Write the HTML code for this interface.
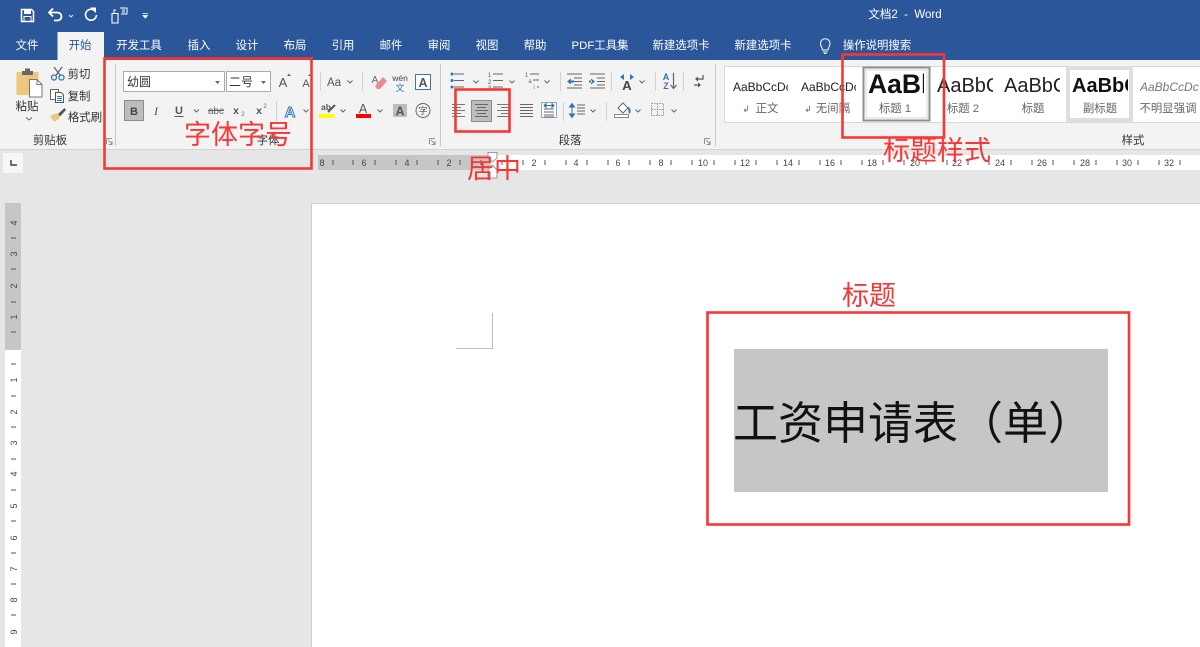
<!DOCTYPE html>
<html lang="zh-CN">
<head>
<meta charset="utf-8">
<title>文档2 - Word</title>
<style>
html,body{margin:0;padding:0;width:1200px;height:647px;overflow:hidden;background:#e6e6e6}
svg{position:absolute;left:0;top:0;display:block;filter:blur(.3px)}
text{font-family:"Liberation Sans","Noto Sans CJK SC",sans-serif}
.tab{font-size:11.4px;fill:#fff;text-anchor:middle}
.lb{font-size:11.4px;fill:#333;text-anchor:middle}
.gl{font-size:11.4px;fill:#666;text-anchor:middle}
.rn{font-size:9px;fill:#444;text-anchor:middle}
.an{font-size:27px;fill:#f93636;font-weight:400;font-family:"Noto Sans CJK SC",sans-serif}
.ch{fill:none;stroke:#666;stroke-width:1}
.bl{fill:#2e75b6}
.sep{stroke:#d2d2d2;stroke-width:1}
</style>
</head>
<body>
<svg width="1200" height="647" viewBox="0 0 1200 647" xmlns="http://www.w3.org/2000/svg">
<defs>
<clipPath id="c1"><rect x="732" y="70" width="56" height="30"/></clipPath>
<clipPath id="c2"><rect x="799" y="70" width="57" height="30"/></clipPath>
<clipPath id="c3"><rect x="867" y="70" width="57" height="30"/></clipPath>
<clipPath id="c4"><rect x="936" y="70" width="57" height="30"/></clipPath>
<clipPath id="c5"><rect x="1003" y="70" width="57" height="30"/></clipPath>
<clipPath id="c6"><rect x="1071" y="70" width="57" height="30"/></clipPath>
<clipPath id="c7"><rect x="1140" y="70" width="60" height="30"/></clipPath>
</defs>

<!-- title bar -->
<rect x="0" y="0" width="1200" height="60" fill="#2b579a"/>
<rect x="57.5" y="32" width="46.5" height="28" fill="#f3f3f3"/>
<!-- save -->
<path d="M21.500 9.500H31.500L33.500 11.500V21.500H21.500Z" fill="none" stroke="#fff" stroke-width="1.500"/>
<rect x="24" y="10" width="7" height="4" fill="#fff"/>
<rect x="24" y="16.500" width="7" height="5" fill="none" stroke="#fff"/>
<!-- undo -->
<path d="M50 12.500H57C60 12.500 61.500 14.500 61.500 16.500S60 20.500 57 20.500H54" fill="none" stroke="#fff" stroke-width="1.800"/>
<path d="M53 8.500L49 12.500L53 16.500" fill="none" stroke="#fff" stroke-width="1.800"/>
<path d="M69 15L71 17L73 15" fill="none" stroke="#dfe6f2" stroke-width="1"/>
<!-- redo -->
<path d="M94.500 10.500A5.500 5.500 0 1 0 96.500 15" fill="none" stroke="#fff" stroke-width="1.600"/>
<path d="M90 7.500H96V13Z" fill="#fff"/>
<!-- touch -->
<path d="M112 13.500H118V23H112Z" fill="none" stroke="#fff" stroke-width="1.100"/>
<path d="M114 13V10H116M120 8H127V14H121" fill="none" stroke="#fff" stroke-width="1"/>
<path d="M122 10H125M122 12H125" stroke="#fff" stroke-width="1"/>
<path d="M142.500 13.500H148M143 15.500L145.250 18L147.500 15.500Z" fill="#fff" stroke="#fff" stroke-width=".8"/>
<text x="905" y="18" text-anchor="middle" font-size="11.500" fill="#fff" xml:space="preserve">文档2  -  Word</text>

<!-- tabs -->
<text class="tab" x="27" y="49">文件</text>
<text class="tab" x="80" y="49" style="fill:#2b579a">开始</text>
<text class="tab" x="139" y="49">开发工具</text>
<text class="tab" x="199" y="49">插入</text>
<text class="tab" x="247" y="49">设计</text>
<text class="tab" x="295" y="49">布局</text>
<text class="tab" x="343" y="49">引用</text>
<text class="tab" x="391" y="49">邮件</text>
<text class="tab" x="439" y="49">审阅</text>
<text class="tab" x="487" y="49">视图</text>
<text class="tab" x="535" y="49">帮助</text>
<text class="tab" x="600" y="49">PDF工具集</text>
<text class="tab" x="681" y="49">新建选项卡</text>
<text class="tab" x="763" y="49">新建选项卡</text>
<text class="tab" x="877" y="49">操作说明搜索</text>
<path d="M822.500 50C822.500 47.500 820.500 46.500 820.500 43.500A4.700 4.700 0 0 1 830 43.500C830 46.500 828 47.500 828 50ZM823 52H827.500M824 53.500H826.500" fill="none" stroke="#fff" stroke-width="1"/>

<!-- ribbon -->
<rect x="0" y="60" width="1200" height="89" fill="#f3f3f3"/>
<rect x="0" y="149" width="1200" height="1" fill="#d4d4d4"/>
<rect x="0" y="150" width="1200" height="497" fill="#e6e6e6"/>

<!-- clipboard group -->
<path d="M16.500 72H38.500V88H29V95H16.500Z" fill="#eec67e"/>
<rect x="22" y="71" width="11" height="4" fill="#666"/>
<rect x="25" y="68.500" width="5" height="3" fill="#666"/>
<path d="M29.500 79.500H37L42 84.500V97H29.500Z" fill="#fff" stroke="#777" stroke-width="1"/>
<path d="M37 79.500V84.500H42" fill="none" stroke="#777"/>
<text class="lb" x="27" y="110" style="font-size:11.500px">粘贴</text>
<path class="ch" d="M26 117.500L29 120L32 117.500"/>
<!-- scissors -->
<path d="M54 67L60.500 76M62 67L55.500 76" stroke="#666" stroke-width="1.300"/>
<circle cx="54" cy="77.500" r="2.500" fill="none" stroke="#2e75b6" stroke-width="1.300"/>
<circle cx="61.500" cy="77.500" r="2.500" fill="none" stroke="#2e75b6" stroke-width="1.300"/>
<text class="lb" x="79" y="78">剪切</text>
<!-- copy -->
<rect x="50.500" y="89.500" width="8" height="10" fill="#fff" stroke="#666"/>
<path d="M55.500 92.500H61L63.500 95V102.500H55.500Z" fill="#fff" stroke="#555"/>
<path d="M57 96.500H62M57 98.500H62M57 100.500H62" stroke="#2e75b6" stroke-width=".9"/>
<text class="lb" x="79" y="100">复制</text>
<!-- format painter -->
<path d="M50 116L57 113L60 118L54 122Z" fill="#eec67e"/>
<path d="M58 114L64.500 108L66 110L60 116.500Z" fill="#555"/>
<text class="lb" x="85" y="121">格式刷</text>
<text class="lb" x="50" y="144">剪贴板</text>
<line class="sep" x1="115.500" y1="64" x2="115.500" y2="146" style="stroke:#c8c8c8"/>
<path d="M106.500 138.500H112M106.500 138.500V144M108 140L112 144M112 141V144.500H108.500" fill="none" stroke="#777" stroke-width=".8"/>

<!-- font group -->
<rect x="123.500" y="71.500" width="101" height="20" fill="#fff" stroke="#ababab"/>
<text x="127" y="86" font-size="12" fill="#333">幼圆</text>
<path d="M215 81H220L217.500 84Z" fill="#666"/>
<rect x="226.500" y="71.500" width="44" height="20" fill="#fff" stroke="#ababab"/>
<text x="229" y="86" font-size="12" fill="#333">二号</text>
<path d="M261 81H266L263.500 84Z" fill="#666"/>
<text x="283" y="87" text-anchor="middle" font-size="13" fill="#555">A</text>
<path d="M287 76H291L289 73.500Z" fill="#2e75b6"/>
<text x="306" y="87" text-anchor="middle" font-size="11" fill="#555">A</text>
<path d="M308 76H311L309.500 74Z" fill="#2e75b6"/>
<rect x="124.500" y="100.500" width="19" height="20" fill="#bdbdbd" stroke="#8c8c8c"/>
<text x="134" y="115" text-anchor="middle" font-size="11" font-weight="700" fill="#444">B</text>
<text x="156" y="115" text-anchor="middle" font-size="12" font-style="italic" fill="#555" style="font-family:'Liberation Serif',serif">I</text>
<text x="179" y="114" text-anchor="middle" font-size="11" font-weight="700" fill="#555">U</text>
<line x1="174.500" y1="116.500" x2="183.500" y2="116.500" stroke="#555"/>
<path class="ch" d="M194 109.500L196.500 112L199 109.500"/>
<text x="216" y="114" text-anchor="middle" font-size="10" fill="#666">abc</text>
<line x1="208" y1="110.500" x2="224" y2="110.500" stroke="#666"/>
<text x="236" y="114" text-anchor="middle" font-size="10.500" font-weight="700" fill="#555">x</text>
<text x="243" y="116" text-anchor="middle" font-size="6" fill="#2e75b6">2</text>
<text x="259" y="114" text-anchor="middle" font-size="10.500" font-weight="700" fill="#555">x</text>
<text x="265" y="108" text-anchor="middle" font-size="6" fill="#2e75b6">2</text>
<line class="sep" x1="276.500" y1="101" x2="276.500" y2="121"/>
<text x="290" y="117" text-anchor="middle" font-size="15" font-weight="700" fill="#dbe7f5" stroke="#2e75b6" stroke-width=".9">A</text>
<path class="ch" d="M303.500 109.500L306 112L308.500 109.500"/>
<line class="sep" x1="320.500" y1="72" x2="320.500" y2="91"/>
<text x="334" y="86" text-anchor="middle" font-size="11.500" fill="#555">Aa</text>
<path class="ch" d="M347.500 80.500L350 83L352.500 80.500"/>
<line class="sep" x1="362.500" y1="72" x2="362.500" y2="91"/>
<text x="375" y="83" text-anchor="middle" font-size="10" fill="#666">A</text>
<path d="M375 86L383 77L387 81L380 89H377Z" fill="#ea8a99"/>
<text x="400" y="81" text-anchor="middle" font-size="8.500" fill="#444">wén</text>
<text x="400" y="91" text-anchor="middle" font-size="9" fill="#2e75b6">文</text>
<rect x="415.500" y="74.500" width="15" height="15" fill="#fff" stroke="#3f75ae"/>
<text x="423" y="87" text-anchor="middle" font-size="12.500" font-weight="700" fill="#555">A</text>
<text x="326" y="110" text-anchor="middle" font-size="8.500" font-weight="700" fill="#555">ab</text>
<path d="M328 112L335 105" stroke="#555" stroke-width="2"/>
<rect x="319" y="114" width="15" height="4" fill="#ffff00"/>
<path class="ch" d="M340.500 109.500L343 112L345.500 109.500"/>
<text x="363" y="113" text-anchor="middle" font-size="12.500" fill="#555">A</text>
<rect x="356" y="114" width="15" height="4" fill="#f00"/>
<path class="ch" d="M377.500 109.500L380 112L382.500 109.500"/>
<rect x="393" y="104" width="14" height="13" fill="#bdbdbd"/>
<text x="400" y="115.500" text-anchor="middle" font-size="12.500" font-weight="700" fill="#555">A</text>
<circle cx="423" cy="110.500" r="7" fill="none" stroke="#666"/>
<text x="423" y="114" text-anchor="middle" font-size="9" fill="#555">字</text>
<text class="lb" x="268" y="144">字体</text>
<path d="M429.500 138.500H435M429.500 138.500V144M431 140L435 144M435 141V144.500H431.500" fill="none" stroke="#777" stroke-width=".8"/>
<line class="sep" x1="440.500" y1="64" x2="440.500" y2="146" style="stroke:#c8c8c8"/>

<!-- paragraph group row 1 -->
<path d="M454 74H464M454 80.500H464M454 87H464" stroke="#666"/>
<circle cx="452" cy="74" r="1.500" class="bl"/><circle cx="452" cy="80.500" r="1.500" class="bl"/><circle cx="452" cy="87" r="1.500" class="bl"/>
<path class="ch" d="M473.500 80.500L476 83L478.500 80.500"/>
<path d="M493 74H503M493 80.500H503M493 87H503" stroke="#666"/>
<text x="489.500" y="77" text-anchor="middle" font-size="6.500" fill="#2e75b6">1</text>
<text x="489.500" y="84" text-anchor="middle" font-size="6.500" fill="#2e75b6">2</text>
<text x="489.500" y="90" text-anchor="middle" font-size="6.500" fill="#2e75b6">3</text>
<path class="ch" d="M509.500 80.500L512 83L514.500 80.500"/>
<path d="M530 74H539M533 80H539M537 87H539" stroke="#666"/>
<text x="526.500" y="77" text-anchor="middle" font-size="6" fill="#2e75b6">1</text>
<text x="530" y="83" text-anchor="middle" font-size="6" fill="#2e75b6">a</text>
<text x="534" y="89" text-anchor="middle" font-size="6" fill="#2e75b6">i</text>
<path class="ch" d="M544.500 80.500L547 83L549.500 80.500"/>
<line class="sep" x1="560.500" y1="72" x2="560.500" y2="91"/>
<path d="M567 74H582M574 78H582M574 81.500H582M574 85H582M567 88H582" stroke="#666"/>
<path d="M567 81.500L571 78.500V84.500ZM570 80.500H574V82.500H570Z" fill="#2e75b6"/>
<path d="M590 74H605M597 78H605M597 81.500H605M597 85H605M590 88H605" stroke="#666"/>
<path d="M595 81.500L591 78.500V84.500ZM589 80.500H592V82.500H589Z" fill="#2e75b6"/>
<line class="sep" x1="611.500" y1="72" x2="611.500" y2="91"/>
<text x="627" y="90" text-anchor="middle" font-size="13" font-weight="700" fill="#444">A</text>
<path d="M620 77L624 74V80ZM634 77L630 74V80Z" fill="#2e75b6"/>
<path class="ch" d="M639.500 80.500L642 83L644.500 80.500"/>
<line class="sep" x1="655.500" y1="72" x2="655.500" y2="91"/>
<text x="666" y="80" text-anchor="middle" font-size="9" font-weight="700" fill="#2e75b6">A</text>
<text x="666" y="89" text-anchor="middle" font-size="9" font-weight="700" fill="#7b52a8">Z</text>
<path d="M673.500 73V88M670.500 85L673.500 88.500L676.500 85" fill="none" stroke="#666" stroke-width="1.200"/>
<line class="sep" x1="683.500" y1="72" x2="683.500" y2="91"/>
<path d="M703 75V79H697" fill="none" stroke="#555" stroke-width="1.200"/>
<path d="M695 79L698 76.500V81.500Z" fill="#555"/>
<path d="M694 85H700" stroke="#555" stroke-width="1.200"/>
<path d="M701 85L698 82.500V87.500Z" fill="#555"/>
<line x1="715.500" y1="64" x2="715.500" y2="146" stroke="#c8c8c8"/>

<!-- paragraph row 2 -->
<path d="M452 104.500H465M452 107.500H461M452 110.500H465M452 113.500H461M452 116.500H465" stroke="#777"/>
<rect x="471.500" y="100.500" width="20" height="21" fill="#bdbdbd" stroke="#8c8c8c"/>
<path d="M475 104.500H488M477 107.500H486M475 110.500H488M477 113.500H486M475 116.500H488" stroke="#666"/>
<path d="M497 104.500H510M501 107.500H510M497 110.500H510M501 113.500H510M497 116.500H510" stroke="#777"/>
<path d="M520 104.500H533M520 107.500H533M520 110.500H533M520 113.500H533M520 116.500H533" stroke="#666"/>
<rect x="541.500" y="102.500" width="15" height="15" fill="#fff" stroke="#85a9cf"/>
<path d="M544 109H554M544 112H554M544 115H554M544 117H554" stroke="#666"/>
<path d="M544 105.500H554M544 105.500L546 103.500V107.500ZM554 105.500L552 103.500V107.500Z" stroke="#2e75b6" fill="#2e75b6"/>
<line class="sep" x1="563.500" y1="102" x2="563.500" y2="121"/>
<path d="M572 105V116M569.500 107L572 103.500L574.500 107ZM569.500 114L572 117.500L574.500 114Z" stroke="#2e75b6" fill="#2e75b6"/>
<path d="M577 105H585M577 108H585M577 111H585M577 114H585" stroke="#666"/>
<path class="ch" d="M590.500 109.500L593 112L595.500 109.500"/>
<line class="sep" x1="606.500" y1="102" x2="606.500" y2="121"/>
<path d="M618 108L623 103L628 108L623 113Z" fill="#fff" stroke="#666"/>
<path d="M628 108C630 109 630 112 629 113" stroke="#2e75b6" stroke-width="2" fill="none"/>
<rect x="614.500" y="114.500" width="14" height="3" fill="#fff" stroke="#888"/>
<path class="ch" d="M635.500 109.500L638 112L640.500 109.500"/>
<rect x="651.500" y="103.500" width="12" height="12" fill="none" stroke="#999" stroke-dasharray="1.500 1"/>
<path d="M657.500 103.500V115.500M651.500 109.500H663.500" stroke="#999" stroke-dasharray="1.500 1"/>
<path class="ch" d="M671.500 109.500L674 112L676.500 109.500"/>
<text class="lb" x="570" y="144">段落</text>
<path d="M704.500 138.500H710M704.500 138.500V144M706 140L710 144M710 141V144.500H706.500" fill="none" stroke="#777" stroke-width=".8"/>

<!-- styles gallery -->
<rect x="724.500" y="66.500" width="476" height="56" fill="#fff" stroke="#d9d9d9"/>
<rect x="863.500" y="67.500" width="66" height="53" fill="#fff" stroke="#8f8f8f" stroke-width="2"/>
<rect x="866" y="70" width="61" height="48" fill="none" stroke="#d6d6d6"/>
<rect x="1068" y="68" width="63" height="52" fill="#fff" stroke="#e0dedc" stroke-width="4"/>
<g clip-path="url(#c1)"><text x="733" y="91" font-size="12" fill="#222">AaBbCcDc</text></g>
<g clip-path="url(#c2)"><text x="801" y="91" font-size="12" fill="#222">AaBbCcDc</text></g>
<g clip-path="url(#c3)"><text x="868" y="93" font-size="26.500" font-weight="700" fill="#111">AaBb</text></g>
<g clip-path="url(#c4)"><text x="937" y="92" font-size="20" fill="#222">AaBbC</text></g>
<g clip-path="url(#c5)"><text x="1004" y="92" font-size="20" fill="#222">AaBbC</text></g>
<g clip-path="url(#c6)"><text x="1072" y="92" font-size="20" font-weight="700" fill="#111">AaBbC</text></g>
<g clip-path="url(#c7)"><text x="1140" y="91" font-size="12" font-style="italic" fill="#777">AaBbCcDc</text></g>
<text x="746" y="112" text-anchor="middle" font-size="9" fill="#666">↲</text>
<text class="gl" x="767" y="112">正文</text>
<text x="808" y="112" text-anchor="middle" font-size="9" fill="#666">↲</text>
<text class="gl" x="833" y="112">无间隔</text>
<text class="gl" x="895" y="112">标题 1</text>
<text class="gl" x="963" y="112">标题 2</text>
<text class="gl" x="1033" y="112">标题</text>
<text class="gl" x="1100" y="112">副标题</text>
<text class="gl" x="1168" y="112">不明显强调</text>
<text class="lb" x="1133" y="144">样式</text>

<!-- corner marker -->
<rect x="3" y="153" width="20" height="20" fill="#f7f7f7"/>
<path d="M11 160V165H17" fill="none" stroke="#444" stroke-width="1.500"/>

<!-- horizontal ruler -->
<rect x="318" y="155" width="173" height="15" fill="#c6c6c6"/>
<rect x="491" y="155" width="709" height="15" fill="#fff"/>
<path stroke="#555" stroke-width="1" d="M333 160V165M353 160V165M375 160V165M396 160V165M417 160V165M438 160V165M460 160V165M481 160V165M502 160V165M523 160V165M545 160V165M566 160V165M587 160V165M608 160V165M629 160V165M650 160V165M671 160V165M692 160V165M714 160V165M735 160V165M756 160V165M777 160V165M799 160V165M820 160V165M841 160V165M862 160V165M883 160V165M904 160V165M926 160V165M947 160V165M968 160V165M989 160V165M1011 160V165M1032 160V165M1053 160V165M1074 160V165M1096 160V165M1117 160V165M1138 160V165M1159 160V165M1180 160V165"/>
<g>
<text class="rn" x="322" y="166">8</text><text class="rn" x="364" y="166">6</text><text class="rn" x="407" y="166">4</text><text class="rn" x="449" y="166">2</text>
<text class="rn" x="534" y="166">2</text><text class="rn" x="576" y="166">4</text><text class="rn" x="618" y="166">6</text><text class="rn" x="661" y="166">8</text><text class="rn" x="703" y="166">10</text><text class="rn" x="745" y="166">12</text><text class="rn" x="788" y="166">14</text><text class="rn" x="830" y="166">16</text><text class="rn" x="872" y="166">18</text><text class="rn" x="915" y="166">20</text><text class="rn" x="957" y="166">22</text><text class="rn" x="1000" y="166">24</text><text class="rn" x="1042" y="166">26</text><text class="rn" x="1085" y="166">28</text><text class="rn" x="1127" y="166">30</text><text class="rn" x="1169" y="166">32</text>
</g>
<path d="M488 152.500H497V158L492.500 162L488 158Z" fill="#fff" stroke="#999"/>
<path d="M488 170L492.500 165L497 170V178H488Z" fill="#fff" stroke="#999"/>

<!-- vertical ruler -->
<rect x="5" y="203" width="16" height="147" fill="#c6c6c6"/>
<rect x="5" y="350" width="16" height="297" fill="#fff"/>
<path d="M11 238H16M11 269H16M11 302H16M11 332H16M11 364H16M11 396H16M11 427H16M11 459H16M11 490H16M11 521H16M11 553H16M11 584H16M11 615H16" stroke="#555"/>
<g>
<text class="rn" transform="translate(17 223) rotate(-90)">4</text>
<text class="rn" transform="translate(17 254) rotate(-90)">3</text>
<text class="rn" transform="translate(17 286) rotate(-90)">2</text>
<text class="rn" transform="translate(17 317) rotate(-90)">1</text>
<text class="rn" transform="translate(17 380) rotate(-90)">1</text>
<text class="rn" transform="translate(17 412) rotate(-90)">2</text>
<text class="rn" transform="translate(17 443) rotate(-90)">3</text>
<text class="rn" transform="translate(17 474) rotate(-90)">4</text>
<text class="rn" transform="translate(17 506) rotate(-90)">5</text>
<text class="rn" transform="translate(17 538) rotate(-90)">6</text>
<text class="rn" transform="translate(17 569) rotate(-90)">7</text>
<text class="rn" transform="translate(17 600) rotate(-90)">8</text>
<text class="rn" transform="translate(17 632) rotate(-90)">9</text>
</g>

<!-- page -->
<rect x="312" y="204" width="888" height="443" fill="#fff"/>
<path d="M311.500 647V203.500H1200" fill="none" stroke="#cfcfcf"/>
<path d="M456 348.500H492.500V313" fill="none" stroke="#bdbdbd"/>

<!-- pasted title image -->
<rect x="734" y="349" width="374" height="143" fill="#c6c6c6"/>
<text x="733" y="439" font-size="45" fill="#111" font-weight="400" style="font-family:'Noto Sans CJK SC',sans-serif">工资申请表（单）</text>

<!-- annotations -->
<rect x="104.500" y="58.500" width="207" height="110" fill="none" stroke="#f93636" stroke-width="2.600"/>
<rect x="455.500" y="89.500" width="54" height="42" fill="none" stroke="#f93636" stroke-width="2.600"/>
<rect x="842.500" y="54.500" width="101.500" height="83" fill="none" stroke="#f93636" stroke-width="2.600"/>
<rect x="707.500" y="312.500" width="421.500" height="212" fill="none" stroke="#f93636" stroke-width="2.600"/>
<text class="an" x="184" y="144">字体字号</text>
<text class="an" x="467" y="178">居中</text>
<text class="an" x="883" y="160">标题样式</text>
<text class="an" x="842" y="305">标题</text>
</svg>
</body>
</html>
